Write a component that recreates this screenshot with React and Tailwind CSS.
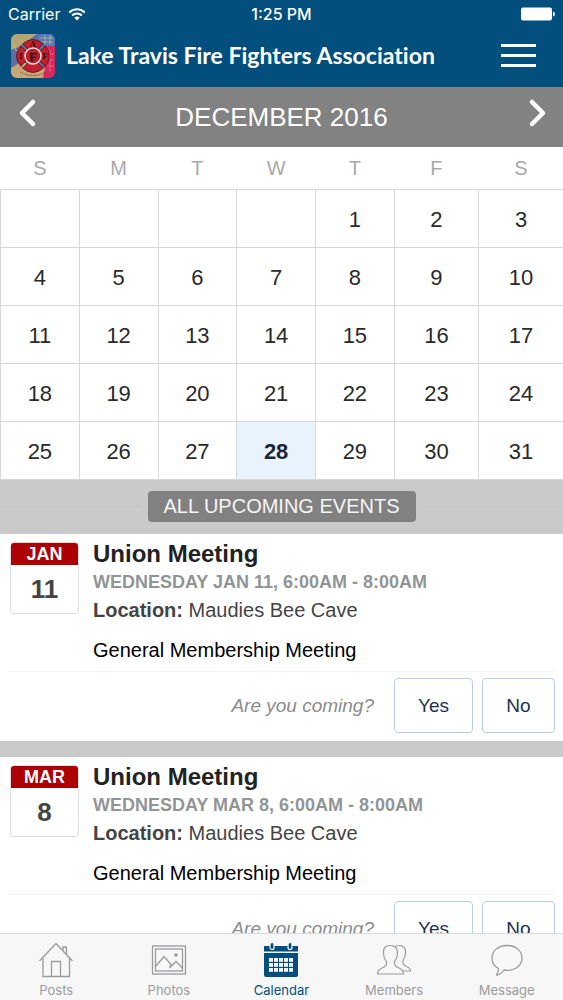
import React, { useState } from 'react';

const weekdays = ['S', 'M', 'T', 'W', 'T', 'F', 'S'];

const weeks = [
  ['', '', '', '', 1, 2, 3],
  [4, 5, 6, 7, 8, 9, 10],
  [11, 12, 13, 14, 15, 16, 17],
  [18, 19, 20, 21, 22, 23, 24],
  [25, 26, 27, 28, 29, 30, 31],
];

const events = [
  { id: 1, month: 'JAN', day: 11, title: 'Union Meeting', time: 'WEDNESDAY JAN 11, 6:00AM - 8:00AM', location: 'Maudies Bee Cave', details: 'General Membership Meeting' },
  { id: 2, month: 'MAR', day: 8, title: 'Union Meeting', time: 'WEDNESDAY MAR 8, 6:00AM - 8:00AM', location: 'Maudies Bee Cave', details: 'General Membership Meeting' },
];

const Logo = () => (
  <svg viewBox="0 0 44 44" className="w-11 h-11 rounded-md shrink-0" aria-hidden="true">
    <rect width="44" height="44" fill="#5d6f9e" />
    <path d="M0 0h26L10 12 0 16z" fill="#b5a572" />
    <path d="M26 0h18v16H30z" fill="#5478c0" />
    <path d="M34 12h10v32H32z" fill="#d8285a" />
    <path d="M0 34l10-6 24 6-2 10H0z" fill="#c9a878" />
    <path d="M2 9l3 8 3-2M10 6l3 5M28 4h14M30 8h12M34 1v10M39 1v10" stroke="#d9d36a" strokeWidth="1" fill="none" opacity="0.6" />
    <path d="M36 20h7M36 26h7M36 32h7M39 16v22" stroke="#f0648a" strokeWidth="0.8" />
    <g fill="#c4202c" stroke="#4a1420" strokeWidth="0.8">
      {[0, 90, 180, 270].map((angle) => (
        <path key={angle} d="M18 20Q17 13 11.5 10Q22 1 32.500 10Q27 13 26 20z" transform={`rotate(${angle} 22 22)`} />
      ))}
    </g>
    <circle cx="22" cy="22" r="8" fill="#b81c28" stroke="#f3dfe0" strokeWidth="1.5" />
    <g fill="#1c0a10" fontFamily="Liberation Serif, serif" fontWeight="bold" textAnchor="middle">
      <text x="22" y="12.500" fontSize="8">A</text>
      <text x="10" y="25" fontSize="9">I</text>
      <text x="34" y="25" fontSize="9">F</text>
      <text x="22" y="26.500" fontSize="13">F</text>
    </g>
    <path d="M9 38q13 7 26 0" stroke="#54404a" strokeWidth="1" strokeDasharray="1 1" fill="none" />
  </svg>
);

const WifiIcon = () => (
  <svg viewBox="0 0 18 13" className="w-[18px] h-[13px]" fill="none" stroke="white" strokeWidth="2" aria-hidden="true">
    <path d="M1.2 4.6a11 11 0 0 1 15.6 0" />
    <path d="M4.1 7.5a7 7 0 0 1 9.8 0" />
    <path d="M9 12.6L6.3 9.8a3.8 3.8 0 0 1 5.4 0z" fill="white" stroke="none" />
  </svg>
);

const BatteryIcon = () => (
  <svg viewBox="0 0 34 14" className="w-[34px] h-3.5" fill="white" aria-hidden="true">
    <rect x="0" y="0.5" width="31" height="13" rx="2" />
    <path d="M32 4.5q2 .5 2 2.5t-2 2.5z" />
  </svg>
);

const HouseIcon = () => (
  <svg viewBox="0 0 36 36" className="w-9 h-9" fill="none" stroke="currentColor" strokeWidth="1.3" aria-hidden="true">
    <path d="M1.5 19L18 1.5 34.5 19" />
    <path d="M5 16v18.5h26.5V16" />
    <path d="M13.5 34.5v-15h9v15" />
    <path d="M25 8.5V5h3.500v7.5" />
  </svg>
);

const PhotoIcon = () => (
  <svg viewBox="0 0 36 36" className="w-9 h-9" fill="none" stroke="currentColor" strokeWidth="1.3" aria-hidden="true">
    <rect x="1.5" y="4" width="33" height="28" />
    <rect x="4.5" y="7" width="27" height="22" />
    <path d="M5 24l8-9.5L20.5 23M18.5 26l6.5-6.5 6.5 6.5M20.5 23l-2 2" />
    <circle cx="25" cy="13" r="1.8" fill="currentColor" stroke="none" />
  </svg>
);

const CalendarIcon = () => (
  <svg viewBox="0 0 36 36" className="w-9 h-9" aria-hidden="true">
    <path d="M1 4h34v5.5H1zM1 11h34v22q0 2-2 2H3q-2 0-2-2z" fill="currentColor" />
    <g fill="currentColor" stroke="#f7f7f8" strokeWidth="1.2">
      <rect x="7" y="0.5" width="4" height="7" rx="2" />
      <rect x="25" y="0.5" width="4" height="7" rx="2" />
    </g>
    <g fill="#f7f7f8">
      {[16, 21, 26].map((y) =>
        [6, 11, 16, 21, 26].map((x) => <rect key={`${x}-${y}`} x={x} y={y} width="4" height="3.8" />)
      )}
    </g>
  </svg>
);

const MembersIcon = () => (
  <svg viewBox="0 0 36 36" className="w-9 h-9" fill="none" stroke="currentColor" strokeWidth="1.2" strokeLinejoin="round" aria-hidden="true">
    <path d="M14 3.500c-5 0-7 3-6.500 8 0 4 1.300 6 3 8 .5 4-1 5-4.500 6.500-3 1.200-4.500 2.500-4.500 6h26c0-3.500-1.500-4.800-4.500-6-3.500-1.500-5-2.500-4.500-6.500 1.700-2 2.800-4 3-8 .5-5-2.500-8-7.500-8z" />
    <path d="M19 5c1-1 2.500-1.500 4.500-1.500 4.500 0 6.500 3 6 7.500 0 3.500-1 5.500-2.500 7.500-.5 3.500.5 4.500 3.500 6 3 1.200 4 2 4 4.500h-8" />
  </svg>
);

const MessageIcon = () => (
  <svg viewBox="0 0 36 36" className="w-9 h-9" fill="none" stroke="currentColor" strokeWidth="1.3" strokeLinejoin="round" aria-hidden="true">
    <path d="M18 3.500c-9 0-15 5.500-15 12.500 0 4.500 2.500 8.500 6.500 10.500 0 3-1 5-2 6.500 3.500-.5 6-2.500 7.500-5 1 .2 2 .3 3 .3 9 0 15-5.300 15-12.300S27 3.500 18 3.500z" />
  </svg>
);

const tabs = [
  { name: 'Posts', Icon: HouseIcon },
  { name: 'Photos', Icon: PhotoIcon },
  { name: 'Calendar', Icon: CalendarIcon },
  { name: 'Members', Icon: MembersIcon },
  { name: 'Message', Icon: MessageIcon },
];

const Header = () => (
  <header className="bg-[#024f7e] text-white shrink-0">
    <div className="grid grid-cols-3 items-center h-7 px-2 font-[Inter,sans-serif] text-base">
      <div className="flex items-center gap-2">
        <span>Carrier</span>
        <WifiIcon />
      </div>
      <span className="text-center font-medium">1:25 PM</span>
      <div className="flex justify-end">
        <BatteryIcon />
      </div>
    </div>
    <div className="flex items-center h-[59px] pl-[11px] pr-[27px] pb-1">
      <Logo />
      <h1 className="ml-[11px] flex-1 font-[Lato,sans-serif] font-bold text-[23px] whitespace-nowrap [font-variant-ligatures:none]">
        Lake Travis Fire Fighters Association
      </h1>
      <button type="button" aria-label="Menu" className="flex flex-col gap-[7px]">
        <span className="block w-[35px] h-[3px] bg-white"></span>
        <span className="block w-[35px] h-[3px] bg-white"></span>
        <span className="block w-[35px] h-[3px] bg-white"></span>
      </button>
    </div>
  </header>
);

const MonthCalendar = () => (
  <section>
    <div className="flex items-center justify-between h-[60px] px-4 bg-[#828282] text-white">
      <button type="button" aria-label="Previous month" className="pb-2">
        <svg viewBox="0 0 24 30" className="w-6 h-[30px]" fill="none" stroke="white" strokeWidth="4.5" strokeLinecap="round" strokeLinejoin="round">
          <path d="M17 4L6 15l11 11" />
        </svg>
      </button>
      <h2 className="text-[26px]">DECEMBER 2016</h2>
      <button type="button" aria-label="Next month" className="pb-2">
        <svg viewBox="0 0 24 30" className="w-6 h-[30px]" fill="none" stroke="white" strokeWidth="4.5" strokeLinecap="round" strokeLinejoin="round">
          <path d="M9 4l11 11L9 26" />
        </svg>
      </button>
    </div>
    <table className="w-full table-fixed border-collapse text-center">
      <thead>
        <tr className="h-[42px]">
          {weekdays.map((day, i) => (
            <th key={i} className={`font-normal text-xl text-[#aaaaaa] ${i < 5 ? 'w-[14%]' : 'w-[15%]'}`}>
              {day}
            </th>
          ))}
        </tr>
      </thead>
      <tbody>
        {weeks.map((week, i) => (
          <tr key={i} className="h-[58px]">
            {week.map((day, j) => (
              <td
                key={j}
                className={`border border-[#d8d8d8] last:border-r-0 pt-0.5 text-[22px] ${day === 28 ? 'bg-[#e8f3fe] font-bold text-[#1c2530]' : 'text-[#2a2a2a]'}`}
              >
                {day}
              </td>
            ))}
          </tr>
        ))}
      </tbody>
    </table>
  </section>
);

const EventCard = ({ event }) => {
  const [answer, setAnswer] = useState('');

  return (
    <article className="bg-white px-2 pb-2">
      <div className="flex gap-3.5 pt-1.5 pb-[7px] pl-0.5 border-b border-[#f3f3f3]">
        {/* date badge */}
        <div className="mt-0.5 w-[69px] h-[72px] shrink-0 rounded-sm border border-[#dddddd] overflow-hidden text-center font-bold">
          <div className="bg-[#ad0003] text-white text-lg leading-[22px]">{event.month}</div>
          <div className="text-[26px] leading-[48px] text-[#444444]">{event.day}</div>
        </div>
        <div className="leading-7">
          <h3 className="text-2xl leading-7 font-bold text-[#222222]">{event.title}</h3>
          <p className="text-lg leading-7 font-bold text-[#929596]">{event.time}</p>
          <p className="text-xl leading-7 text-[#444444]">
            <strong>Location:</strong> {event.location}
          </p>
          <p className="mt-3 text-xl leading-7 text-black">{event.details}</p>
        </div>
      </div>
      <div className="flex items-center justify-end pt-1.5 text-[19px]">
        <em className="mr-5 pt-0.5 text-[#8c8c8c]">Are you coming?</em>
        <button
          type="button"
          aria-pressed={answer === 'yes'}
          onClick={() => setAnswer('yes')}
          className="w-[79px] h-[55px] mr-[9px] pt-0.5 border border-[#b9cce6] rounded-sm text-[#1d3155]"
        >
          Yes
        </button>
        <button
          type="button"
          aria-pressed={answer === 'no'}
          onClick={() => setAnswer('no')}
          className="w-[73px] h-[55px] pt-0.5 border border-[#b9cce6] rounded-sm text-[#1d3155]"
        >
          No
        </button>
      </div>
    </article>
  );
};

const App = () => {
  const [tab, setTab] = useState('Calendar');

  return (
    <div className="flex flex-col h-screen bg-white font-['Liberation_Sans',Arial,sans-serif]">
      <Header />
      <main className="flex-1 min-h-0 overflow-hidden">
        <MonthCalendar />
        <div className="bg-[#cbcacb]">
          <div className="flex items-center h-[54px]">
            <div className="flex-1 h-px bg-[#c4c3c4]"></div>
            <h2 className="mx-2 px-4 rounded-sm bg-[#828182] text-[#f5f5f5] text-xl leading-[31px]">
              ALL UPCOMING EVENTS
            </h2>
            <div className="flex-1 h-px bg-[#c4c3c4]"></div>
          </div>
          <div className="flex flex-col gap-4">
            {events.map((event) => (
              <EventCard key={event.id} event={event} />
            ))}
          </div>
        </div>
      </main>
      <nav className="grid grid-cols-5 h-[67px] shrink-0 bg-[#f7f7f8] border-t border-[#d9d9db]">
        {tabs.map(({ name, Icon }) => (
          <button
            key={name}
            type="button"
            onClick={() => setTab(name)}
            className={`flex flex-col items-center gap-1 pt-2 font-[Inter,sans-serif] text-[13px] leading-4 ${tab === name ? 'text-[#024f7e]' : 'text-[#9b9b9d]'}`}
          >
            <Icon />
            {name}
          </button>
        ))}
      </nav>
    </div>
  );
};

export default App;
